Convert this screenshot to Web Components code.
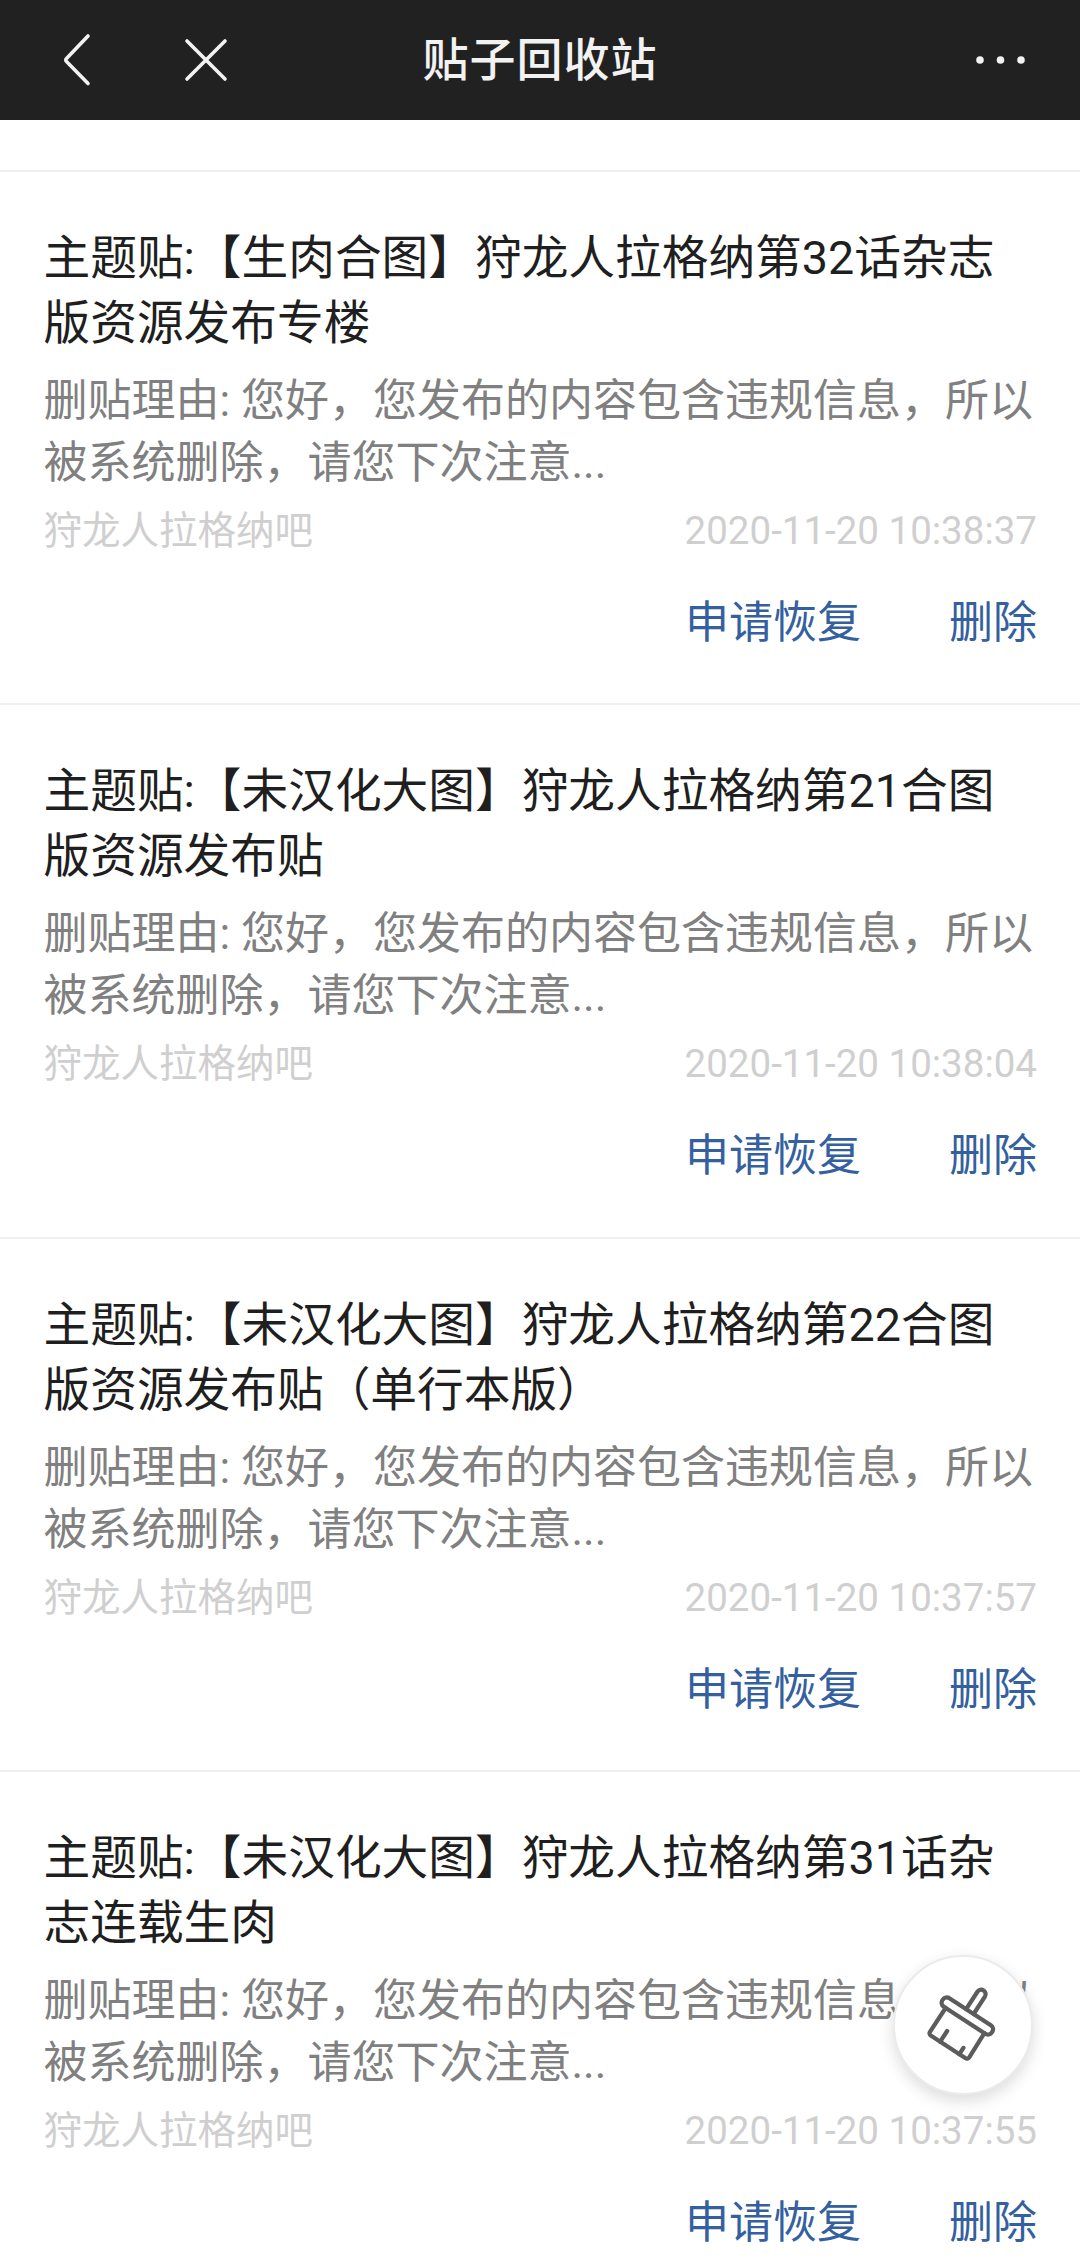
<!DOCTYPE html>
<html lang="zh-CN"><head><meta charset="utf-8"><title>贴子回收站</title>
<style>
html,body{margin:0;padding:0;background:#fff}
body{width:1080px;height:2264px;overflow:hidden;position:relative;font-family:Roboto,"Noto Sans CJK SC",sans-serif}
</style></head><body>
<top-bar title-text="贴子回收站"></top-bar>
<post-list>
<post-card forum="狩龙人拉格纳吧" time="2020-11-20 10:38:37"><span slot="title">主题贴:【生肉合图】狩龙人拉格纳第32话杂志<br>版资源发布专楼</span></post-card>
<post-card forum="狩龙人拉格纳吧" time="2020-11-20 10:38:04"><span slot="title">主题贴:【未汉化大图】狩龙人拉格纳第21合图<br>版资源发布贴</span></post-card>
<post-card forum="狩龙人拉格纳吧" time="2020-11-20 10:37:57"><span slot="title">主题贴:【未汉化大图】狩龙人拉格纳第22合图<br>版资源发布贴（单行本版）</span></post-card>
<post-card forum="狩龙人拉格纳吧" time="2020-11-20 10:37:55"><span slot="title">主题贴:【未汉化大图】狩龙人拉格纳第31话杂<br>志连载生肉</span></post-card>
</post-list>
<clean-fab></clean-fab>
<script>
class TopBar extends HTMLElement{constructor(){super();this.attachShadow({mode:'open'}).innerHTML=`<style>
:host{display:grid;grid-template-columns:1fr auto 1fr;align-items:center;height:120px;background:#212121;color:#f2f2f2}
.l{display:flex;align-items:center;gap:0;padding-left:60px}
.r{display:flex;justify-content:flex-end;padding-right:55px}
svg{display:block}
h1{margin:0;font:500 46px/1 Roboto,"Noto Sans CJK SC",sans-serif;letter-spacing:1px}
</style>
<div class="l">
<svg width="32" height="56" viewBox="0 0 32 56" fill="none" stroke="#f2f2f2" stroke-width="3.6" stroke-linecap="round" stroke-linejoin="round"><path d="M28 4 6.5 26.5Q5 28 6.5 29.500L28 51.500"/></svg>
<svg style="margin-left:92px" width="44" height="44" viewBox="0 0 44 44" fill="none" stroke="#f2f2f2" stroke-width="3.600" stroke-linecap="round"><path d="M3 3 41 41M41 3 3 41"/></svg>
</div>
<h1></h1>
<div class="r"><svg width="50" height="12" viewBox="0 0 50 12" fill="#f2f2f2"><circle cx="5" cy="6" r="3.800"/><circle cx="25.500" cy="6" r="3.800"/><circle cx="46" cy="6" r="3.800"/></svg></div>`;
this.shadowRoot.querySelector('h1').textContent=this.getAttribute('title-text');}}
class PostList extends HTMLElement{constructor(){super();this.attachShadow({mode:'open'}).innerHTML=`<style>:host{display:block;padding-top:50px}</style><slot></slot>`;}}
class PostCard extends HTMLElement{constructor(){super();this.attachShadow({mode:'open'}).innerHTML=`<style>
:host{display:block;box-sizing:border-box;height:533.300px;border-top:2px solid #efefef;padding:54px 43px 0 43.500px;font-family:Roboto,"Noto Sans CJK SC",sans-serif}
.title{font-size:46.700px;line-height:65px;color:#1f1f1f;white-space:nowrap}
.desc{margin-top:14px;font-size:44px;line-height:62px;color:#808080;white-space:nowrap}
.meta{display:flex;justify-content:space-between;align-items:center;height:50px;margin-top:12px;font-size:38.500px;line-height:50px;color:#cfcfcf}
.acts{display:flex;justify-content:flex-end;gap:88px;margin-top:42px;font-size:44px;line-height:50px;color:#34609f}
</style>
<div class="title"><slot name="title"></slot></div>
<div class="desc">删贴理由: 您好，您发布的内容包含违规信息，所以<br>被系统删除，请您下次注意...</div>
<div class="meta"><span class="f"></span><span class="t"></span></div>
<div class="acts"><span>申请恢复</span><span>删除</span></div>`;
this.shadowRoot.querySelector('.f').textContent=this.getAttribute('forum');
this.shadowRoot.querySelector('.t').textContent=this.getAttribute('time');}}
class CleanFab extends HTMLElement{constructor(){super();this.attachShadow({mode:'open'}).innerHTML=`<style>
:host{position:absolute;left:892.500px;top:1954.500px;width:140px;height:140px;box-sizing:border-box;border-radius:50%;background:#fff;border:2px solid #ebebeb;box-shadow:0 6px 16px rgba(0,0,0,.14);display:flex;align-items:center;justify-content:center}
svg{overflow:visible;margin-right:2px}
</style>
<svg width="85" height="85" viewBox="0 0 80 80" fill="none" stroke="#5c5c5c" stroke-width="4" stroke-linecap="round" stroke-linejoin="round"><g transform="rotate(33 40 40)">
<rect x="12.500" y="25.500" width="55.500" height="9.600" rx="4.500"/>
<path d="M35.800 25.500V6a4.200 4.200 0 0 1 8.400 0V25.500"/>
<path d="M19 35.100 18.900 62a2.500 2.500 0 0 0 2.500 2.500H60.500a2.500 2.500 0 0 0 2.500-2.500L62.500 35.100"/>
<path d="M32 64.500V52.500M53.500 64.500V57.500"/>
</g></svg>`;}}
customElements.define('top-bar',TopBar);customElements.define('post-list',PostList);customElements.define('post-card',PostCard);customElements.define('clean-fab',CleanFab);
</script>
</body></html>
